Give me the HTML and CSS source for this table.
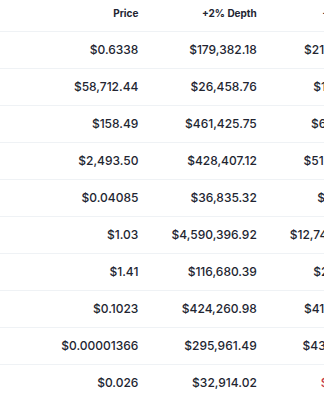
FILE: index.html
```html
<!DOCTYPE html>
<html>
<head>
<meta charset="utf-8">
<link rel="stylesheet" href="styles.css">
</head>
<body>
<div class="viewport">
  <div class="table">
    <div class="row head">
      <div class="cell lead"></div>
      <div class="cell">Price</div>
      <div class="cell">+2% Depth</div>
      <div class="cell">-2% Depth</div>
    </div>
    <div class="row"><div class="cell lead"></div><div class="cell">$0.6338</div><div class="cell">$179,382.18</div><div class="cell">$213,456.78</div></div>
    <div class="row"><div class="cell lead"></div><div class="cell">$58,712.44</div><div class="cell">$26,458.76</div><div class="cell">$18,345.21</div></div>
    <div class="row"><div class="cell lead"></div><div class="cell">$158.49</div><div class="cell">$461,425.75</div><div class="cell">$64,215.33</div></div>
    <div class="row"><div class="cell lead"></div><div class="cell">$2,493.50</div><div class="cell">$428,407.12</div><div class="cell">$512,873.40</div></div>
    <div class="row"><div class="cell lead"></div><div class="cell">$0.04085</div><div class="cell">$36,835.32</div><div class="cell">$8,912.44</div></div>
    <div class="row"><div class="cell lead"></div><div class="cell">$1.03</div><div class="cell">$4,590,396.92</div><div class="cell">$12,745,320.18</div></div>
    <div class="row"><div class="cell lead"></div><div class="cell">$1.41</div><div class="cell">$116,680.39</div><div class="cell">$27,540.19</div></div>
    <div class="row"><div class="cell lead"></div><div class="cell">$0.1023</div><div class="cell">$424,260.98</div><div class="cell">$418,220.57</div></div>
    <div class="row"><div class="cell lead"></div><div class="cell">$0.00001366</div><div class="cell">$295,961.49</div><div class="cell">$436,901.22</div></div>
    <div class="row"><div class="cell lead"></div><div class="cell">$0.026</div><div class="cell">$32,914.02</div><div class="cell low">$7,316.82</div></div>
  </div>
</div>
</body>
</html>
```

FILE: styles.css
```css
html, body {
  margin: 0;
  padding: 0;
  background: #ffffff;
}

.viewport {
  width: 324px;
  height: 400px;
  overflow: hidden;
}

.table {
  width: 420px;
  font-family: Inter, "Noto Sans", sans-serif;
  color: #222531;
}

.row {
  display: flex;
  height: 34px;
  padding-bottom: 2px;
  align-items: center;
  border-bottom: 1px solid #eff2f5;
  font-size: 12px;
  font-weight: 500;
}

.row.head {
  height: 25px;
  padding-bottom: 6px;
  font-size: 10px;
  font-weight: 700;
}

.cell {
  flex: 0 0 118.4px;
  text-align: right;
  white-space: nowrap;
}

.cell.lead {
  flex: 0 0 20px;
}

.cell.low {
  color: #c2334a;
}
```
